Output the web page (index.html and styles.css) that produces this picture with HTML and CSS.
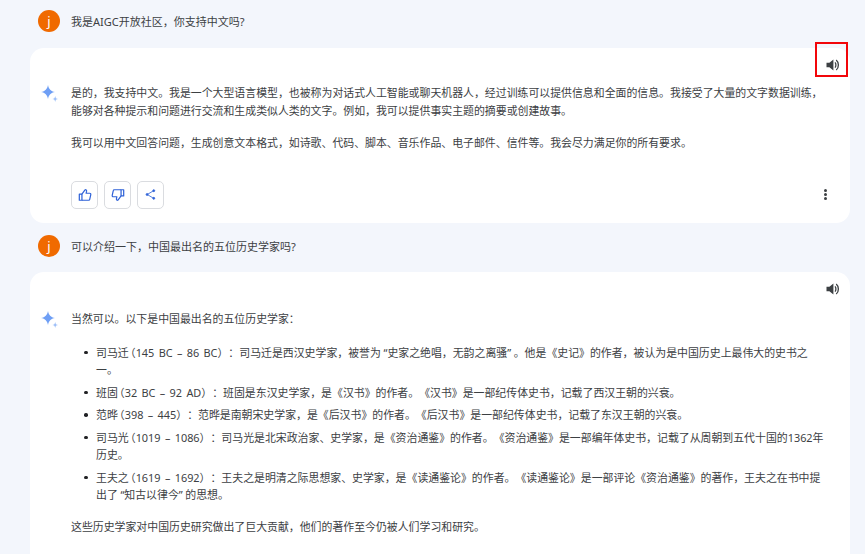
FILE: index.html
```html
<!DOCTYPE html>
<html lang="zh">
<head>
<meta charset="utf-8">
<title>Chat</title>
<link rel="stylesheet" href="styles.css">
</head>
<body>
<svg class="defs" width="0" height="0" aria-hidden="true">
  <defs>
    <symbol id="spark" viewBox="0 0 20 20">
      <path d="M8 1C8.8 5 10.8 7.2 15 8C10.8 8.8 8.8 11 8 15C7.2 11 5.2 8.8 1 8C5.2 7.2 7.2 5 8 1Z" fill="#6f9ff5"/>
      <path d="M15.2 12C15.5 14 16.2 14.7 18.2 15C16.2 15.3 15.5 16 15.2 18C14.9 16 14.2 15.3 12.2 15C14.2 14.7 14.9 14 15.2 12Z" fill="#9dbff8"/>
    </symbol>
    <symbol id="speaker" viewBox="0 0 16 16">
      <path d="M1.5 5.8H4.4L8.4 2.6V13.4L4.4 10.2H1.5Z" fill="#3c4043"/>
      <path d="M10 5.4C11.2 6.6 11.2 9.4 10 10.6" fill="none" stroke="#3c4043" stroke-width="1.3"/>
      <path d="M11.2 2.9C14.1 5.2 14.1 10.8 11.2 13.1" fill="none" stroke="#3c4043" stroke-width="1.3"/>
    </symbol>
  </defs>
</svg>
<main class="chat">
  <section class="user-row">
    <span class="avatar">j</span>
    <p class="user-text">我是AIGC开放社区，你支持中文吗?</p>
  </section>
  <article class="card card-first">
    <span class="speaker-frame"></span>
    <div class="card-top"><svg class="speaker" width="16" height="16"><use href="#speaker"/></svg></div>
    <div class="answer">
      <svg class="spark" width="20" height="20"><use href="#spark"/></svg>
      <div class="answer-body">
        <p>是的，我支持中文。我是一个大型语言模型，也被称为对话式人工智能或聊天机器人，经过训练可以提供信息和全面的信息。我接受了大量的文字数据训练，能够对各种提示和问题进行交流和生成类似人类的文字。例如，我可以提供事实主题的摘要或创建故事。</p>
        <p>我可以用中文回答问题，生成创意文本格式，如诗歌、代码、脚本、音乐作品、电子邮件、信件等。我会尽力满足你的所有要求。</p>
      </div>
    </div>
    <div class="actions">
      <div class="action-group">
        <button class="action" aria-label="赞"><svg width="14" height="14" viewBox="0 0 16 16" fill="none" stroke="#2f62d8" stroke-width="1.4" stroke-linejoin="round"><path d="M1.5 7H4.5V14H1.5Z"/><path d="M4.5 7L8 2.2C9 1.6 10 2.4 9.8 3.6L9.3 6H13.4C14.2 6 14.8 6.8 14.6 7.6L13.4 13C13.3 13.6 12.8 14 12.2 14H4.5"/></svg></button>
        <button class="action" aria-label="踩"><svg width="14" height="14" viewBox="0 0 16 16" fill="none" stroke="#2f62d8" stroke-width="1.4" stroke-linejoin="round"><path d="M14.5 9H11.5V2H14.5Z"/><path d="M11.5 9L8 13.8C7 14.4 6 13.6 6.2 12.4L6.7 10H2.6C1.8 10 1.2 9.2 1.4 8.4L2.6 3C2.7 2.4 3.2 2 3.8 2H11.5"/></svg></button>
        <button class="action" aria-label="分享"><svg width="13" height="13" viewBox="0 0 16 16" fill="#2f62d8" stroke="#2f62d8" stroke-width="1"><path d="M11.5 3.5L4 8L11.5 12.5" fill="none"/><circle cx="12" cy="3.3" r="1.2"/><circle cx="3.8" cy="8" r="1.2"/><circle cx="12" cy="12.7" r="1.2"/></svg></button>
      </div>
      <span class="more" aria-label="更多"><i></i><i></i><i></i></span>
    </div>
  </article>
  <section class="user-row user-row-second">
    <span class="avatar">j</span>
    <p class="user-text">可以介绍一下，中国最出名的五位历史学家吗?</p>
  </section>
  <article class="card card-second">
    <div class="card-top"><svg class="speaker" width="16" height="16"><use href="#speaker"/></svg></div>
    <div class="answer">
      <svg class="spark" width="20" height="20"><use href="#spark"/></svg>
      <div class="answer-body">
        <p>当然可以。以下是中国最出名的五位历史学家：</p>
        <ul>
          <li>司马迁<span class="open">（</span>145 BC – 86 BC）：司马迁是西汉史学家，被誉为<span class="quote-open">“</span>史家之绝唱，无韵之离骚<span class="quote-close">”</span>。他是《史记》的作者，被认为是中国历史上最伟大的史书之一。</li>
          <li>班固<span class="open">（</span>32 BC – 92 AD）：班固是东汉史学家，是《汉书》的作者。《汉书》是一部纪传体史书，记载了西汉王朝的兴衰。</li>
          <li>范晔<span class="open">（</span>398 – 445）：范晔是南朝宋史学家，是《后汉书》的作者。《后汉书》是一部纪传体史书，记载了东汉王朝的兴衰。</li>
          <li>司马光<span class="open">（</span>1019 – 1086）：司马光是北宋政治家、史学家，是《资治通鉴》的作者。《资治通鉴》是一部编年体史书，记载了从周朝到五代十国的1362年历史。</li>
          <li>王夫之<span class="open">（</span>1619 – 1692）：王夫之是明清之际思想家、史学家，是《读通鉴论》的作者。《读通鉴论》是一部评论《资治通鉴》的著作，王夫之在书中提出了<span class="quote-open">“</span>知古以律今<span class="quote-close">”</span>的思想。</li>
        </ul>
        <p>这些历史学家对中国历史研究做出了巨大贡献，他们的著作至今仍被人们学习和研究。</p>
      </div>
    </div>
  </article>
</main>
</body>
</html>
```
FILE: styles.css
```css
* { box-sizing: border-box; }
html, body { height: 100%; }
body {
  margin: 0;
  height: 554px;
  overflow: hidden;
  background: #f3f6fc;
  color: #3c4043;
  font-family: "Noto Sans", "Noto Sans CJK SC", sans-serif;
  font-size: 10.9px;
  line-height: 17.5px;
  word-spacing: 1.5px;
  text-spacing-trim: space-all;
  font-feature-settings: "chws" 0, "halt" 0;
}
.defs { position: absolute; }
.chat { padding: 9px 15px 0 30px; }
p { margin: 0; }
.user-row {
  display: flex;
  align-items: center;
  gap: 11px;
  height: 23px;
  padding-left: 8px;
  margin-bottom: 16px;
}
.user-row-second { margin-top: 11px; margin-bottom: 15px; }
.user-text { padding-top: 2px; font-size: 11px; }
.avatar {
  width: 22px;
  height: 22px;
  flex: none;
  border-radius: 50%;
  background: #f06a00;
  color: #fff;
  font-size: 13px;
  line-height: 22px;
  text-align: center;
}
.card {
  position: relative;
  background: #fff;
  border-radius: 14px;
  padding: 0 9px 0 10px;
}
.card-first { height: 175px; }
.card-second { height: 300px; }
.card-top {
  display: flex;
  justify-content: flex-end;
  align-items: center;
  height: 33px;
}
.speaker-frame {
  position: absolute;
  right: 2px;
  top: -6px;
  width: 33px;
  height: 35px;
  border: 2px solid #f2060a;
}
.answer {
  display: flex;
  gap: 11px;
  padding-top: 3px;
}
.card-second .answer { padding-top: 5px; }
.spark { flex: none; }
.answer-body { width: 754px; }
.answer-body > p + p { margin-top: 15px; }
ul { margin: 16px 0 14.5px; padding-left: 25px; list-style: none; }
li { position: relative; margin-bottom: 5px; }
li:last-child { margin-bottom: 0; }
li::before {
  content: "";
  position: absolute;
  left: -12px;
  top: 7px;
  width: 3.5px;
  height: 3.5px;
  border-radius: 50%;
  background: #202124;
}
.open { font-feature-settings: "halt" 1; padding-left: 1.5px; }
.quote-open { padding-left: 2.6px; }
.quote-close { padding-right: 2.6px; }
.actions {
  display: flex;
  justify-content: space-between;
  align-items: center;
  margin-top: 29px;
  padding: 0 14px 0 31px;
}
.action-group { display: flex; gap: 6px; }
.action {
  width: 27px;
  height: 28px;
  padding: 0;
  display: flex;
  align-items: center;
  justify-content: center;
  background: #fff;
  border: 1px solid #dadce0;
  border-radius: 5px;
}
.more { display: flex; flex-direction: column; gap: 1.2px; }
.more i {
  display: block;
  width: 3px;
  height: 3px;
  border-radius: 50%;
  background: #3c4043;
}
```
